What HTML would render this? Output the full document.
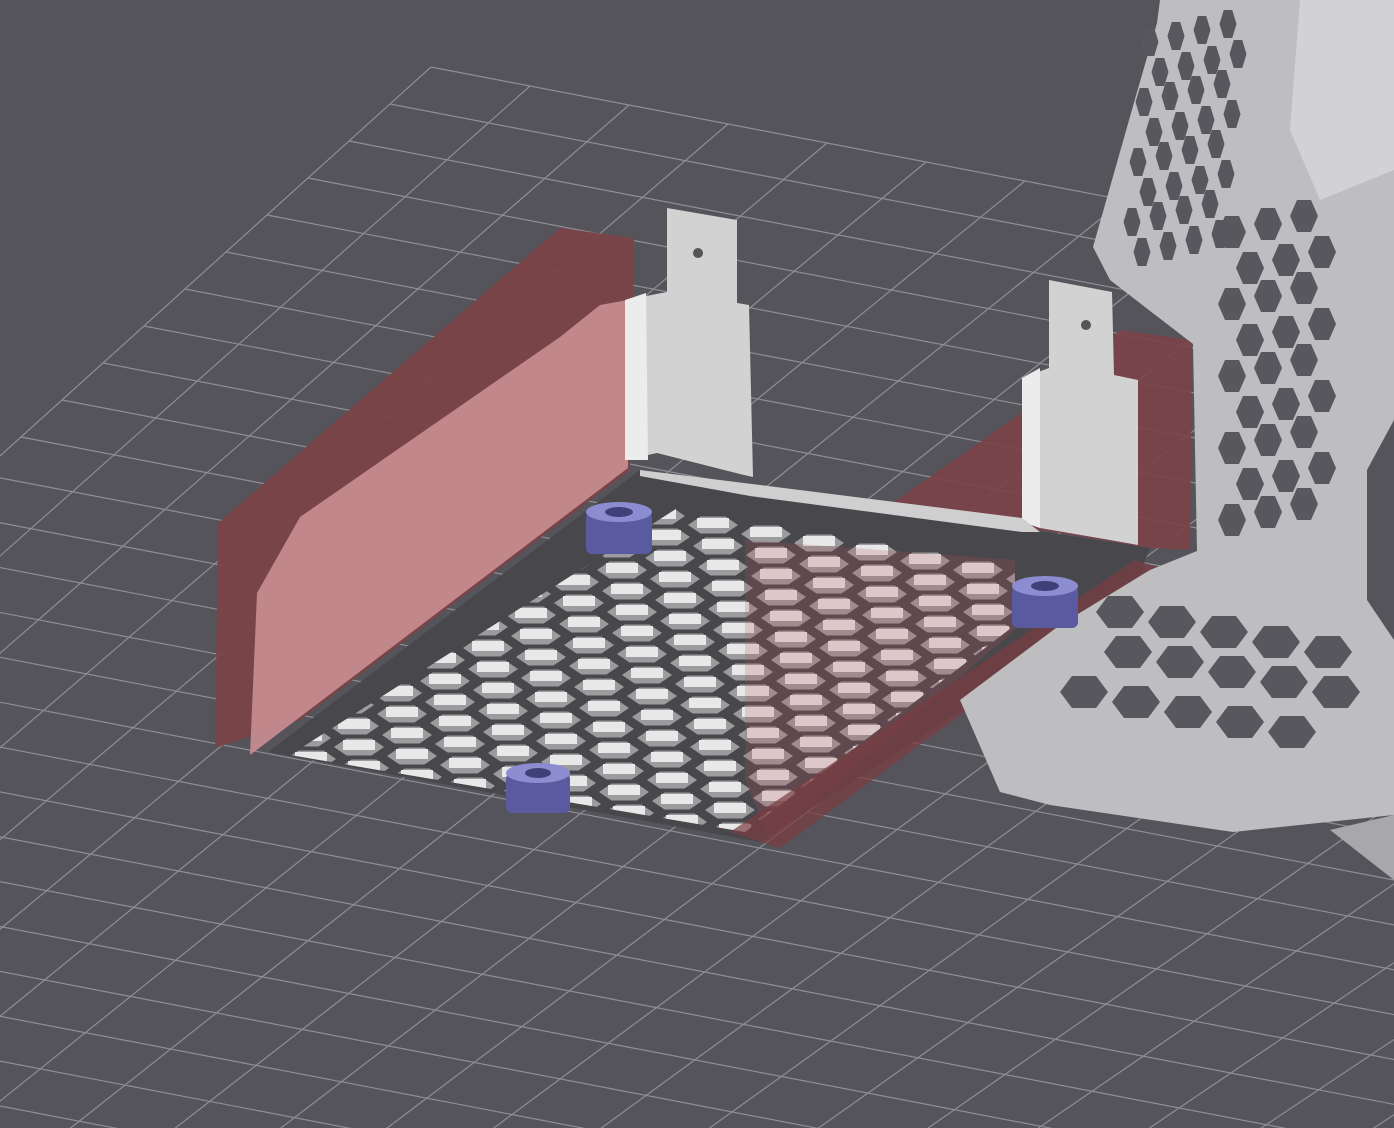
<!DOCTYPE html>
<html><head><meta charset="utf-8">
<style>html,body{margin:0;padding:0;background:#55545b;overflow:hidden;width:1394px;height:1128px}#w{width:1394px;height:1128px;overflow:hidden;position:relative}svg{display:block;overflow:hidden}</style>
</head><body><div id="w">
<svg id="s" width="1394" height="1128" viewBox="0 0 1394 1128" xmlns="http://www.w3.org/2000/svg">
<defs>
<clipPath id="pc"><polygon points="290,755 690,500 1015,552 1015,625 745,832"/></clipPath>
<clipPath id="full"><rect width="1394" height="1128"/></clipPath>
</defs>
<g clip-path="url(#full)">
<rect width="1394" height="1128" fill="#55545b"/>
<g id="grid" stroke="#8e8e94" stroke-width="1.2" fill="none"></g>
<polygon points="215,748 218,523 560,228 634,238 630,470 300,720" fill="#7a4347" opacity="0.95"/>
<polygon points="250,755 257,593 300,517 560,337 600,305 628,300 628,468" fill="#c98d90" opacity="0.92"/>
<polygon points="268,752 640,470 1150,548 1130,600 760,842" fill="#48474b"/>
<g id="hex" clip-path="url(#pc)"></g>
<polygon points="745,540 1015,560 1015,630 770,840 745,780" fill="#b0545a" opacity="0.22"/>
<polygon points="890,505 1040,400 1120,330 1192,340 1190,550 1150,548" fill="#7a4347" opacity="0.9"/>
<polygon points="730,832 1135,560 1160,568 780,848" fill="#7a3c40" opacity="0.7"/>
<polygon points="667,208 737,220 737,303 749,305 753,477 740,474 657,453 625,460 625,300 667,292" fill="#d2d2d2"/>
<polygon points="625,300 646,293 648,460 625,460" fill="#ececec"/>
<circle cx="698" cy="253" r="5" fill="#555"/>
<polygon points="1049,280 1112,292 1114,375 1138,380 1138,545 1110,540 1040,528 1022,520 1022,378 1049,368" fill="#d2d2d2"/>
<polygon points="1022,378 1040,368 1040,528 1022,522" fill="#ececec"/>
<circle cx="1086" cy="325" r="5" fill="#555"/>
<polygon points="640,470 752,484 1022,518 1040,532 1022,532 750,496 640,476" fill="#cfcfcf"/>
<polygon points="1160,0 1394,0 1394,815 1233,832 1050,805 1000,792 960,700 1060,625 1150,570 1197,551 1193,344 1110,280 1093,247 1137,92 1157,23" fill="#bebec0"/>
<polygon points="1300,0 1394,0 1394,170 1320,200 1290,130" fill="#d2d2d4"/>
<polygon points="1394,420 1367,470 1367,600 1394,640" fill="#55545b"/>
<polygon points="1394,815 1394,880 1330,830" fill="#a8a8aa"/>
<g id="hex2" fill="#58575e"></g>
<g fill="#5a5aa0">
<rect x="586" y="512" width="66" height="42" rx="6"/><ellipse cx="619" cy="512" rx="33" ry="10" fill="#8c8cd0"/><ellipse cx="619" cy="512" rx="14" ry="5" fill="#404078"/>
<rect x="1012" y="586" width="66" height="42" rx="6"/><ellipse cx="1045" cy="586" rx="33" ry="10" fill="#8c8cd0"/><ellipse cx="1045" cy="586" rx="14" ry="5" fill="#404078"/>
<rect x="506" y="773" width="64" height="40" rx="6"/><ellipse cx="538" cy="773" rx="32" ry="10" fill="#8c8cd0"/><ellipse cx="538" cy="773" rx="13" ry="5" fill="#404078"/>
</g>
</g>
</svg></div>
<script>
var ns="http://www.w3.org/2000/svg";
function L(g,a,b){var l=document.createElementNS(ns,"line");l.setAttribute("x1",a[0]);l.setAttribute("y1",a[1]);l.setAttribute("x2",b[0]);l.setAttribute("y2",b[1]);g.appendChild(l);}
var C=[431,67],A=[99,19],B=[-41,37];
function P(m,n){var s=1-0.006*n;return [C[0]+m*A[0]*s+n*B[0],C[1]+m*A[1]*s+n*B[1]];}
var g=document.getElementById("grid"),NM=22,NN=30;
for(var m=0;m<=NM;m++)L(g,P(m,0),P(m,NN));
for(var n=0;n<=NN;n++)L(g,P(0,n),P(NM,n));
function hx(g,cx,cy,w,h,f){var p=document.createElementNS(ns,"polygon");p.setAttribute("points",[[cx-w/2,cy],[cx-w/4,cy-h/2],[cx+w/4,cy-h/2],[cx+w/2,cy],[cx+w/4,cy+h/2],[cx-w/4,cy+h/2]].map(function(q){return q.join(",")}).join(" "));if(f)p.setAttribute("fill",f);g.appendChild(p);}
var h=document.getElementById("hex");
for(var c=-12;c<8;c++)for(var r=0;r<16;r++){var x=713+c*53+r*5,y=523+c*9+r*21;
hx(h,x,y+2,50,17,"#9c9c9e");
var q=document.createElementNS(ns,"rect");q.setAttribute("x",x-16);q.setAttribute("y",y-5);q.setAttribute("width",32);q.setAttribute("height",10);q.setAttribute("fill","#e8e8e8");h.appendChild(q);}
var h2=document.getElementById("hex2");
for(var r=0;r<8;r++)for(var c=0;c<4;c++){var x=1150+c*26+(r%2)*13-r*3,y=42+r*30+c*-6;if(x>1275)continue;hx(h2,x,y,17,28);}
for(var r=0;r<9;r++)for(var c=0;c<3;c++){var x=1232+c*36+(r%2)*18,y=232+r*36-c*8;hx(h2,x,y,28,32);}
for(var r=0;r<3;r++)for(var c=0;c<5;c++){var x=1120+c*52+(r%2)*26-r*18,y=612+r*40+c*10;if(x>1390)continue;hx(h2,x,y,48,32);}
</script>
</body></html>
